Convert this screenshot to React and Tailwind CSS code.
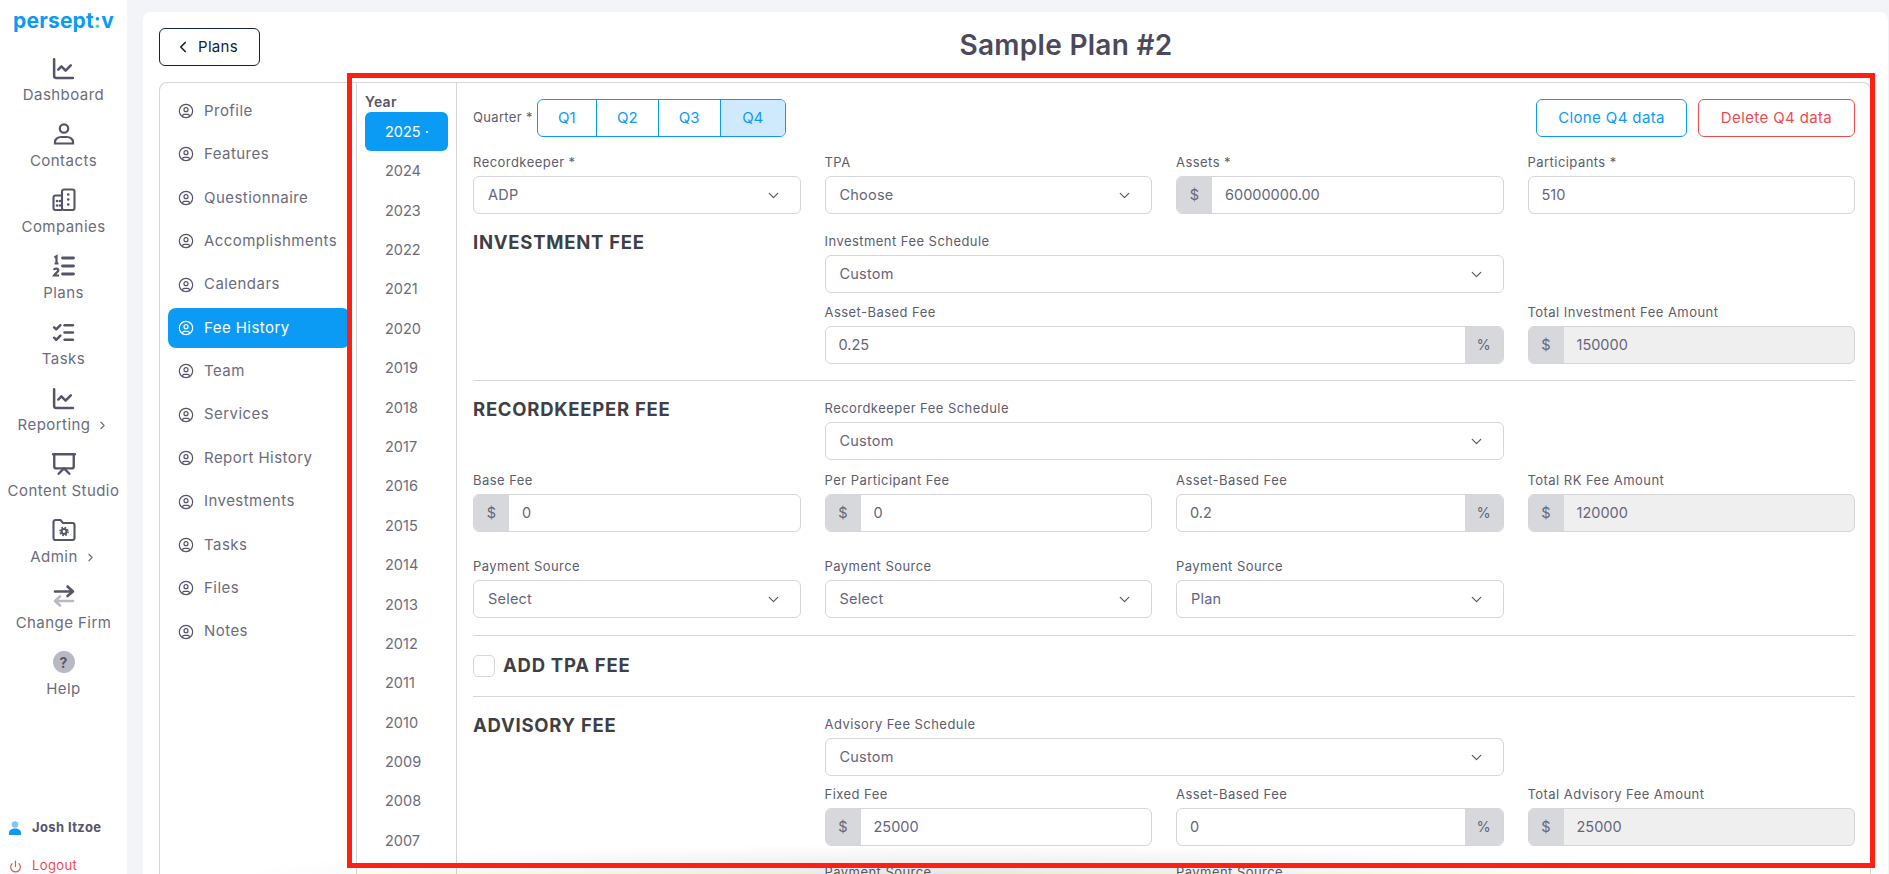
import { ChevronDown, ChevronLeft, ChevronRight, CircleUser, ChartLine, Presentation, ListChecks, Power } from "lucide-react";

const FONT = "font-['Inter','Liberation_Sans',sans-serif]";

function UserIcon() {
  return (
    <svg width="24" height="24" viewBox="0 0 24 24" fill="none" stroke="#55556a" strokeWidth="2.2">
      <circle cx="12" cy="6.5" r="4.2" />
      <path d="M3 21.5v-1.5c0-3 3-5 6-5h6c3 0 6 2 6 5v1.5z" />
    </svg>
  );
}

function BuildingsIcon() {
  return (
    <svg width="24" height="24" viewBox="0 0 24 24" fill="none" stroke="#55556a" strokeWidth="2.1">
      <path d="M10 7.500H3.500a2 2 0 0 0-2 2V20a2 2 0 0 0 2 2H10" />
      <rect x="10" y="1.500" width="12.500" height="20.500" rx="2" />
      <path d="M5 13h.1M8 13h.1M5 17.500h.1M8 17.500h.1M16.200 6.500h.1M16.200 11.500h.1M16.200 16.500h.1" strokeLinecap="round" strokeWidth="2.600" />
    </svg>
  );
}

function NumberedIcon() {
  return (
    <svg width="24" height="24" viewBox="0 0 24 24" fill="none" stroke="#55556a" strokeWidth="2.800" strokeLinecap="round">
      <path d="M10.500 4h11M10.500 12h11M10.500 20h11" />
      <path d="M2.500 3.500l2-1.200v7M2.500 9.500h4" strokeWidth="2.200" strokeLinecap="butt" />
      <path d="M1.800 16c.6-2 4.700-2 4.500.5-.2 1.500-3 2.500-4.300 5h5" strokeWidth="2.200" strokeLinecap="butt" />
    </svg>
  );
}

function FolderGearIcon() {
  return (
    <svg width="24" height="24" viewBox="0 0 24 24" fill="none" stroke="#55556a" strokeWidth="2.100">
      <path d="M1.500 4a2 2 0 0 1 2-2h5l2.500 3h9.500a2 2 0 0 1 2 2v13a2 2 0 0 1-2 2h-17a2 2 0 0 1-2-2z" />
      <circle cx="12" cy="13.500" r="2.400" strokeWidth="2" />
      <circle cx="12" cy="13.500" r="4" strokeWidth="1.600" strokeDasharray="1.700 1.440" />
    </svg>
  );
}

function SwapIcon() {
  return (
    <svg width="24" height="24" viewBox="0 0 24 24" fill="none" strokeWidth="2.600" strokeLinecap="round" strokeLinejoin="round">
      <path d="M3 7.500h18M15.500 2.500L21 7.500l-5.500 4.500" stroke="#55556a" />
      <path d="M21 17H3M8 12.500L3 17l5 4.500" stroke="#b9b9c4" />
    </svg>
  );
}

function HelpIcon() {
  return (
    <span className="flex h-[22px] w-[22px] items-center justify-center rounded-full bg-[#b9b9c4] text-[14px] font-bold text-[#55556a]">?</span>
  );
}

const MAIN_NAV = [
  { label: "Dashboard", icon: <ChartLine size={25} color="#55556a" strokeWidth={2.4} /> },
  { label: "Contacts", icon: <UserIcon /> },
  { label: "Companies", icon: <BuildingsIcon /> },
  { label: "Plans", icon: <NumberedIcon /> },
  { label: "Tasks", icon: <ListChecks size={25} color="#55556a" strokeWidth={2.4} /> },
  { label: "Reporting", icon: <ChartLine size={25} color="#55556a" strokeWidth={2.4} />, more: true },
  { label: "Content Studio", icon: <Presentation size={26} color="#55556a" strokeWidth={2.2} /> },
  { label: "Admin", icon: <FolderGearIcon />, more: true },
  { label: "Change Firm", icon: <SwapIcon /> },
  { label: "Help", icon: <HelpIcon /> },
];

const PLAN_TABS = ["Profile", "Features", "Questionnaire", "Accomplishments", "Calendars", "Fee History", "Team", "Services", "Report History", "Investments", "Tasks", "Files", "Notes"];

const YEARS = [2025, 2024, 2023, 2022, 2021, 2020, 2019, 2018, 2017, 2016, 2015, 2014, 2013, 2012, 2011, 2010, 2009, 2008, 2007, 2006];

function Sidebar() {
  return (
    <aside className="flex h-full w-[127px] shrink-0 flex-col items-center bg-white">
      <div className="mt-[6px] h-[41px] text-[21px] font-bold leading-[30px] tracking-[0.01em] text-[#0b9bf5]">
        persept<span className="bg-[linear-gradient(#0b9bf5_52%,#4fd6a0_52%)] bg-clip-text text-transparent">:</span>v
      </div>
      <nav className="mt-[5px] flex w-full flex-col">
        {MAIN_NAV.map((item) => (
          <div key={item.label} className="flex h-[66px] flex-col items-center text-[#6c6c7c]">
            <div className="flex h-[32px] items-center justify-center">{item.icon}</div>
            <div className="mt-[1px] flex items-center gap-[6px] whitespace-nowrap text-[15px] leading-[20px] tracking-[0.03em]">
              {item.label}
              {item.more && <ChevronRight size={13} strokeWidth={2} />}
            </div>
          </div>
        ))}
      </nav>
      <div className="mt-auto flex w-full flex-col pl-[9px]">
        <div className="flex h-[20px] items-center gap-[11px] text-[13px] font-bold tracking-[0.03em] text-[#55556a]">
          <svg width="12" height="14" viewBox="0 0 12 14">
            <circle cx="6" cy="3.500" r="3.300" fill="#7cc8fa" />
            <path d="M0 14v-2c0-3 2.500-4.500 6-4.500s6 1.500 6 4.500v2z" fill="#0b9bf5" />
          </svg>
          Josh Itzoe
        </div>
        <div className="mb-[-2px] mt-[18px] flex h-[20px] items-center gap-[10px] text-[13px] tracking-[0.03em] text-[#ef4a4f]">
          <Power size={13} strokeWidth={2.2} />
          Logout
        </div>
      </div>
    </aside>
  );
}

function Label({ children }) {
  return <div className="mb-[4px] h-[20px] whitespace-nowrap text-[13px] leading-[20px] tracking-[0.035em] text-[#5d5d6c]">{children}</div>;
}

function SelectField({ label, value }) {
  return (
    <div className="min-w-0">
      <Label>{label}</Label>
      <div className="flex h-[38px] items-center justify-between rounded-[6px] border border-[#d6d6d9] bg-white pl-[14px] pr-[18px] text-[14.5px] tracking-[0.015em] text-[#66667a]">
        {value}
        <ChevronDown size={17} color="#55556a" strokeWidth={1.7} />
      </div>
    </div>
  );
}

function InputField({ label, value, prefix, suffix, readOnly }) {
  return (
    <div className="min-w-0">
      <Label>{label}</Label>
      <div className={`flex h-[38px] items-stretch overflow-hidden rounded-[6px] border border-[#d6d6d9] text-[14.5px] text-[#66667a] ${readOnly ? "bg-[#efeff0]" : "bg-white"}`}>
        {prefix && <div className="flex w-[35px] shrink-0 items-center justify-center bg-[#d7d8dc]">{prefix}</div>}
        <div className="flex flex-1 items-center px-[13px]">{value}</div>
        {suffix && <div className="flex w-[38px] shrink-0 items-center justify-center bg-[#d7d8dc]">{suffix}</div>}
      </div>
    </div>
  );
}

function SectionTitle({ children }) {
  return <div className="pt-[1px] text-[18.5px] font-bold leading-[20px] tracking-[0.04em] whitespace-nowrap text-[#3f3f46]">{children}</div>;
}

function Divider({ className }) {
  return <div className={`h-px bg-[#d6d6d9] ${className}`} />;
}

function FeeForm() {
  return (
    <div className="min-w-0 flex-1 pl-[16px] pr-[15px] pt-[16px]">
      {/* Quarter row */}
      <div className="flex items-center justify-between">
        <div className="flex items-center gap-[4px]">
          <span className="text-[13px] tracking-[0.025em] text-[#5d5d6c]">Quarter *</span>
          <div className="flex h-[38px] overflow-hidden rounded-[6px] border border-[#0b9bf5] text-[15px] text-[#0b9bf5]">
            <div className="flex w-[59px] items-center justify-center border-r border-[#0b9bf5]">Q1</div>
            <div className="flex w-[62px] items-center justify-center border-r border-[#0b9bf5]">Q2</div>
            <div className="flex w-[62px] items-center justify-center border-r border-[#0b9bf5]">Q3</div>
            <div className="flex w-[64px] items-center justify-center bg-[#cfeafd]">Q4</div>
          </div>
        </div>
        <div className="flex gap-[11px] text-[15px] tracking-[0.025em]">
          <div className="flex h-[38px] w-[151px] items-center justify-center rounded-[6px] border border-[#0b9bf5] text-[#0b9bf5]">Clone Q4 data</div>
          <div className="flex h-[38px] w-[157px] items-center justify-center rounded-[6px] border border-[#ef4a4f] text-[#ef4a4f]">Delete Q4 data</div>
        </div>
      </div>

      <div className="mt-[15px] grid grid-cols-4 gap-x-[24px]">
        <SelectField label="Recordkeeper *" value="ADP" />
        <SelectField label="TPA" value="Choose" />
        <InputField label="Assets *" value="60000000.00" prefix="$" />
        <InputField label="Participants *" value="510" />
      </div>

      {/* Investment fee */}
      <div className="mt-[17px] grid grid-cols-4 gap-x-[24px] gap-y-[9px]">
        <SectionTitle>INVESTMENT FEE</SectionTitle>
        <div className="col-span-2">
          <SelectField label="Investment Fee Schedule" value="Custom" />
        </div>
        <div />
        <div />
        <div className="col-span-2">
          <InputField label="Asset-Based Fee" value="0.25" suffix="%" />
        </div>
        <InputField label="Total Investment Fee Amount" value="150000" prefix="$" readOnly />
      </div>
      <Divider className="mt-[16px]" />

      {/* Recordkeeper fee */}
      <div className="mt-[17px] grid grid-cols-4 gap-x-[24px] gap-y-[10px]">
        <SectionTitle>RECORDKEEPER FEE</SectionTitle>
        <div className="col-span-2">
          <SelectField label="Recordkeeper Fee Schedule" value="Custom" />
        </div>
        <div />
        <InputField label="Base Fee" value="0" prefix="$" />
        <InputField label="Per Participant Fee" value="0" prefix="$" />
        <InputField label="Asset-Based Fee" value="0.2" suffix="%" />
        <InputField label="Total RK Fee Amount" value="120000" prefix="$" readOnly />
      </div>
      <div className="mt-[24px] grid grid-cols-4 gap-x-[24px]">
        <SelectField label="Payment Source" value="Select" />
        <SelectField label="Payment Source" value="Select" />
        <SelectField label="Payment Source" value="Plan" />
      </div>
      <Divider className="mt-[17px]" />

      {/* TPA fee toggle */}
      <div className="flex h-[60px] items-center gap-[8px]">
        <div className="h-[22px] w-[22px] rounded-[5px] border border-[#d6d6d9] bg-white" />
        <div className="pb-[3px]">
          <SectionTitle>ADD TPA FEE</SectionTitle>
        </div>
      </div>
      <Divider />

      {/* Advisory fee */}
      <div className="mt-[17px] grid grid-cols-4 gap-x-[24px] gap-y-[8px]">
        <SectionTitle>ADVISORY FEE</SectionTitle>
        <div className="col-span-2">
          <SelectField label="Advisory Fee Schedule" value="Custom" />
        </div>
        <div />
        <div />
        <InputField label="Fixed Fee" value="25000" prefix="$" />
        <InputField label="Asset-Based Fee" value="0" suffix="%" />
        <InputField label="Total Advisory Fee Amount" value="25000" prefix="$" readOnly />
      </div>
      <div className="mt-[16px] grid grid-cols-4 gap-x-[24px]">
        <div />
        <SelectField label="Payment Source" value="Select" />
        <SelectField label="Payment Source" value="Select" />
      </div>
    </div>
  );
}

export default function App() {
  return (
    <div className={`relative flex h-screen overflow-hidden bg-[#f3f4f7] ${FONT}`}>
      <Sidebar />
      <main className="ml-[16px] mr-[1px] mt-[12px] flex min-w-0 flex-1 flex-col rounded-t-[8px] bg-white pl-[16px] pr-[17px]">
        <header className="relative flex h-[70px] shrink-0 items-center justify-center pl-[102px]">
          <div className="absolute left-0 top-[16px] flex h-[38px] w-[101px] items-center gap-[6px] rounded-[6px] border border-[#10233f] pl-[14px] text-[15px] tracking-[0.02em] text-[#10233f]">
            <ChevronLeft size={18} strokeWidth={2.2} />
            Plans
          </div>
          <h1 className="mt-[-4px] text-[28px] font-semibold tracking-[0.01em] text-[#4a4a5a]">Sample Plan #2</h1>
        </header>

        <div className="flex min-h-0 flex-1 rounded-t-[8px] border border-b-0 border-[#d6d6d9]">
          {/* Plan tabs */}
          <div className="w-[196px] shrink-0 pl-[8px] pr-[6px] pt-[8px]">
            {PLAN_TABS.map((tab) => {
              const active = tab === "Fee History";
              return (
                <div
                  key={tab}
                  className={`mb-[3.400px] flex h-[40px] items-center gap-[10px] rounded-[8px] pl-[10px] text-[15px] tracking-[0.03em] ${active ? "bg-[#0b9bf5] text-white" : "text-[#6c6c7c]"}`}
                >
                  <CircleUser size={16} strokeWidth={1.800} color={active ? "#ffffff" : "#55556a"} />
                  {tab}
                </div>
              );
            })}
          </div>

          {/* Year list */}
          <div className="w-[101px] shrink-0 border-x border-[#d6d6d9] px-[8px] pt-[9px]">
            <div className="h-[20px] text-[14px] font-semibold leading-[20px] tracking-[0.02em] text-[#55556a]">Year</div>
            {YEARS.map((year, i) => (
              <div
                key={year}
                className={`flex h-[39.400px] items-center rounded-[6px] pl-[20px] text-[14.500px] ${i === 0 ? "bg-[#0b9bf5] text-white" : "text-[#6c6c7c]"}`}
              >
                {year}
                {i === 0 && " ·"}
              </div>
            ))}
          </div>

          <FeeForm />
        </div>
      </main>

      {/* soft shadow along the bottom of the page */}
      <div className="pointer-events-none absolute bottom-0 left-[230px] right-[230px] h-[30px] bg-[radial-gradient(ellipse_at_center_bottom,#00000018,transparent_70%)]" />

      {/* red highlight frame drawn over the page */}
      <div className="pointer-events-none absolute left-[347px] top-[73px] h-[795px] w-[1528px] border-[5px] border-[#ff2015]" />
    </div>
  );
}
